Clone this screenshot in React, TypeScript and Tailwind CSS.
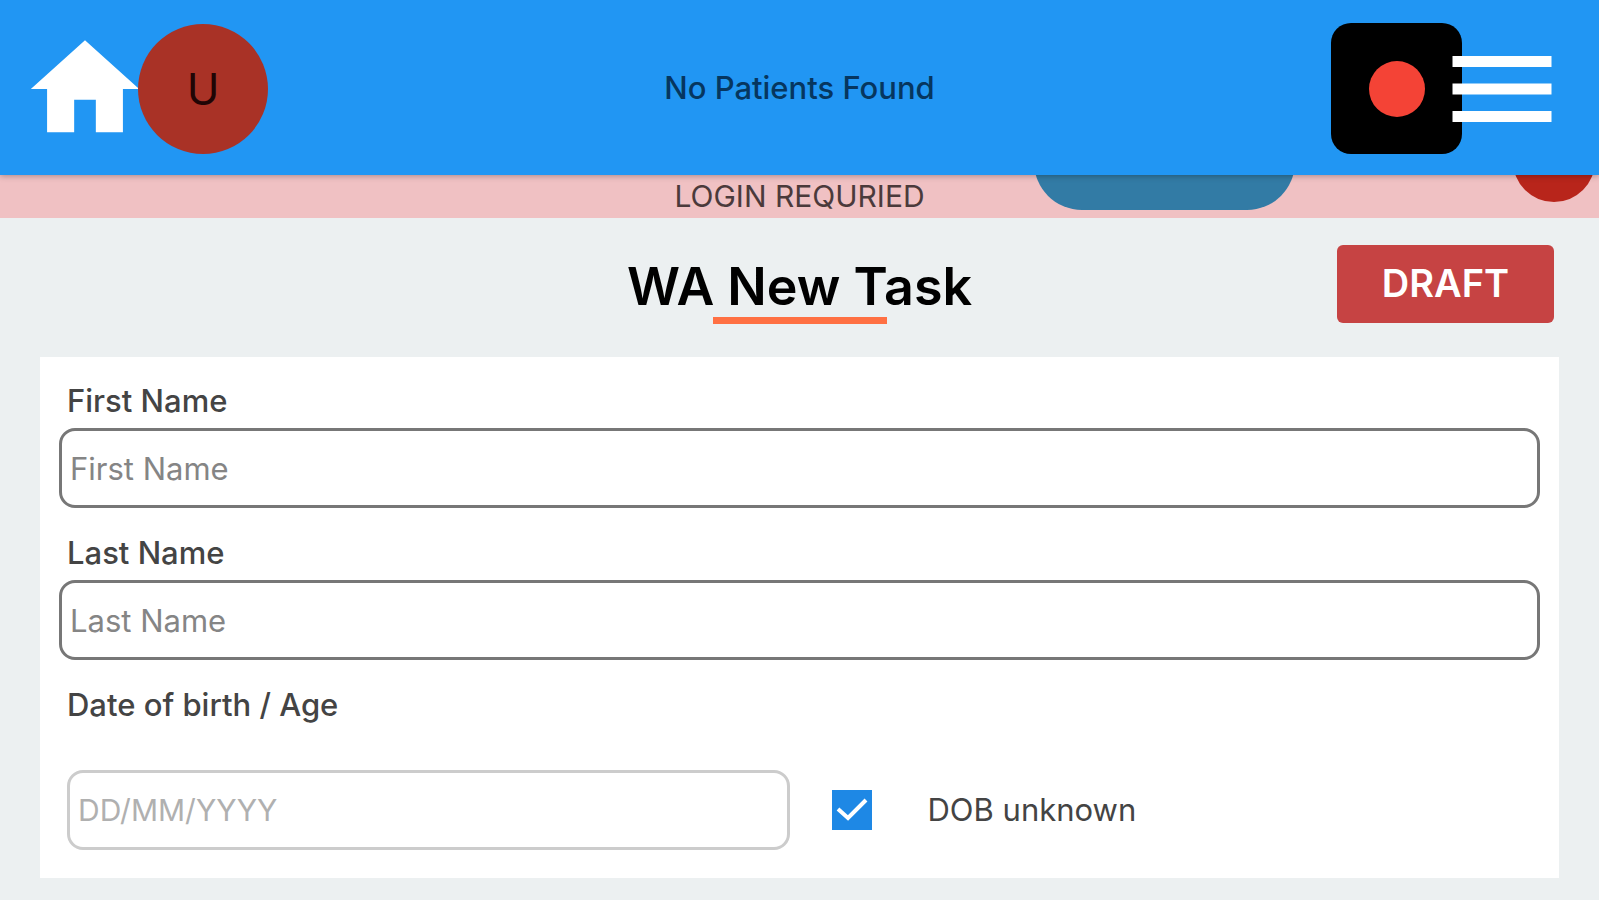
import React, { useState } from "react";

const HomeIcon: React.FC = () => (
  <svg viewBox="0 0 24 24" className="size-[130px]" fill="currentColor" aria-hidden="true">
    <path d="M10 20v-6h4v6h5v-8h3L12 3 2 12h3v8z" />
  </svg>
);

const MenuIcon: React.FC = () => (
  <svg viewBox="0 0 24 24" className="size-[132px]" fill="currentColor" aria-hidden="true">
    <path d="M3 18h18v-2H3v2zm0-5h18v-2H3v2zm0-7v2h18V6H3z" />
  </svg>
);

const Header: React.FC = () => (
  <header className="relative z-10 grid h-[175px] grid-cols-[1fr_auto_1fr] items-center bg-[#2196f3] px-[31px] pt-0.5 shadow-[0_1px_6px_rgba(0,0,0,0.3)]">
    <div className="flex items-center">
      <button type="button" aria-label="Home" className="-mr-3 -ml-[11px] text-white">
        <HomeIcon />
      </button>
      <button
        type="button"
        className="relative flex size-[130px] items-center justify-center rounded-full bg-[#a93226] text-[44px] text-[#200505]"
      >
        U
      </button>
    </div>
    <p className="text-[31px] font-medium text-[#06365f]">No Patients Found</p>
    <div className="flex items-center justify-end">
      <button
        type="button"
        aria-label="Record"
        className="-mr-[26px] flex size-[131px] items-center justify-center rounded-[20px] bg-black"
      >
        <span className="size-14 rounded-full bg-[#f44336]" />
      </button>
      <button type="button" aria-label="Menu" className="relative text-white">
        <MenuIcon />
      </button>
    </div>
  </header>
);

const LoginBanner: React.FC = () => (
  <div className="relative flex h-[43px] items-center justify-center overflow-hidden bg-[#f0c1c3]">
    <p className="text-[30px] text-[#4b3a3b]">LOGIN REQURIED</p>
    <span className="absolute bottom-2 right-[304px] h-24 w-[261px] rounded-full bg-[#327ba5]" />
    <span className="absolute bottom-4 right-1 size-[82px] rounded-full bg-[#b8251b]" />
  </div>
);

const TextField: React.FC<{ id: string; label: string }> = ({ id, label }) => (
  <div className="flex flex-col gap-[9px]">
    <label htmlFor={id} className="px-2 text-[31px] leading-9 font-medium text-[#444]">
      {label}
    </label>
    <input
      id={id}
      type="text"
      placeholder={label}
      className="h-20 w-full rounded-[16px] border-3 border-[#777] bg-white px-2 text-[31px] text-[#333] placeholder:text-[#858585]"
    />
  </div>
);

const App: React.FC = () => {
  const [dobUnknown, setDobUnknown] = useState(true);

  return (
    <div className="min-h-screen bg-[#ecf0f1] pb-[23px] font-['Inter',sans-serif]">
      <Header />
      <LoginBanner />
      <main className="px-10">
        <div className="grid h-[139px] grid-cols-[1fr_auto_1fr] items-center pt-1.5">
          <div className="col-start-2 flex flex-col items-center">
            <h1 className="text-[52px] leading-[60px] font-semibold text-black">WA New Task</h1>
            <span className="h-[7px] w-[174px] bg-[#ff7043]" />
          </div>
          <button
            type="button"
            className="mr-[5px] mb-3.5 h-[78px] w-[217px] justify-self-end rounded-md bg-[#c64343] text-[38px] font-semibold text-white"
          >
            DRAFT
          </button>
        </div>

        <form className="flex flex-col gap-[27px] bg-white px-[19px] pt-[26px] pb-7">
          <TextField id="first-name" label="First Name" />
          <TextField id="last-name" label="Last Name" />
          <div className="flex flex-col gap-[47px] px-2">
            <label htmlFor="dob" className="text-[31px] leading-9 font-medium text-[#444]">
              Date of birth / Age
            </label>
            <div className="grid grid-cols-2 items-center">
              <div className="pr-2.5">
                <input
                  id="dob"
                  type="text"
                  placeholder="DD/MM/YYYY"
                  className="block h-20 w-full rounded-[16px] border-3 border-[#ccc] bg-white px-2 text-[30px] text-[#333] placeholder:text-[#b0b0b0]"
                />
              </div>
              <div className="flex items-center pl-8">
                <span className="relative size-10">
                  <input
                    id="dob-unknown"
                    type="checkbox"
                    checked={dobUnknown}
                    onChange={(e) => setDobUnknown(e.target.checked)}
                    className="peer block size-10 appearance-none border-2 border-[#1e88e5] checked:bg-[#1e88e5]"
                  />
                  <svg
                    viewBox="0 0 40 40"
                    className="pointer-events-none absolute inset-0 hidden size-10 peer-checked:block"
                    fill="none"
                    stroke="white"
                    strokeWidth="4"
                    aria-hidden="true"
                  >
                    <path d="M6 19l10 9L34 10" />
                  </svg>
                </span>
                <label htmlFor="dob-unknown" className="pl-14 text-[31px] leading-9 text-[#444]">
                  DOB unknown
                </label>
              </div>
            </div>
          </div>
        </form>
      </main>
    </div>
  );
};

export default App;
